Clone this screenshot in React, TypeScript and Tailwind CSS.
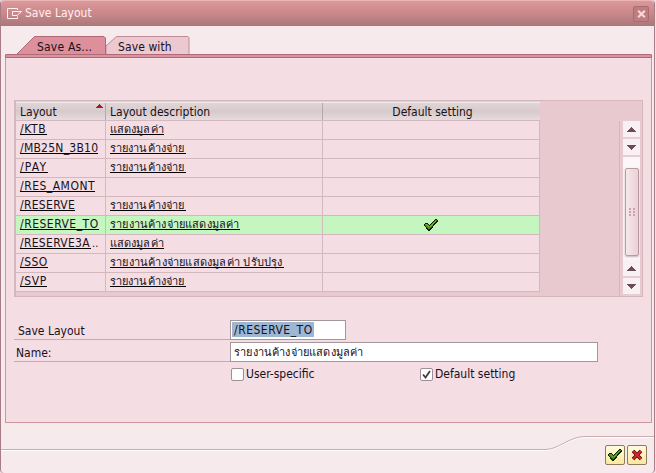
import type { ReactNode } from "react";

type Row = { name: string; nameClass: string; text: string; textClass: string; selected?: boolean; more?: boolean };

const rows: Row[] = [
  { name: "/KTB", nameClass: "w-[27px] tracking-[0.6px]", text: "แสดงมูลค่า", textClass: "w-[54px] tracking-[0.1px]" },
  { name: "/MB25N_3B10", nameClass: "w-[78px] tracking-[0.25px]", text: "รายงานค้างจ่าย", textClass: "w-[76px] tracking-[0.1px]" },
  { name: "/PAY", nameClass: "w-[28px] tracking-[1.2px]", text: "รายงานค้างจ่าย", textClass: "w-[76px] tracking-[0.1px]" },
  { name: "/RES_AMONT", nameClass: "w-[75px] tracking-[0.5px]", text: "", textClass: "" },
  { name: "/RESERVE", nameClass: "w-[55px] tracking-[0.3px]", text: "รายงานค้างจ่าย", textClass: "w-[76px] tracking-[0.1px]" },
  { name: "/RESERVE_TO", nameClass: "w-[79px] tracking-[0.5px]", text: "รายงานค้างจ่ายแสดงมูลค่า", textClass: "w-[130px] tracking-[0.17px]", selected: true },
  { name: "/RESERVE3A", nameClass: "w-[71px] tracking-[0.3px]", text: "แสดงมูลค่า", textClass: "w-[54px] tracking-[0.1px]", more: true },
  { name: "/SSO", nameClass: "w-[28px] tracking-[0.5px]", text: "รายงานค้างจ่ายแสดงมูลค่า ปรับปรุง", textClass: "w-[174px] tracking-[0.2px]" },
  { name: "/SVP", nameClass: "w-[27px] tracking-[0.6px]", text: "รายงานค้างจ่าย", textClass: "w-[76px] tracking-[0.1px]" },
];

function Check({ className = "", dark = false }: { className?: string; dark?: boolean }) {
  return (
    <svg className={className} width="14" height="12" viewBox="0 0 14 12" shapeRendering="crispEdges">
      <path d="M1 4h3v1h1v1h1V5h1V4h1V3h1V2h1V1h1V0h2v1h1v2h-1v1h-1v1h-1v1h-1v1h-1v1H9v1H8v1H7v1H6v1H4v-1H3v-1H2V8H1V7H0V5h1z" fill="#102008" />
      <path d="M1 5h3v1h1v1h1V6h1V5h1V4h1V3h1V2h1V1h2v1h-1v1h-1v1h-1v1h-1v1H9v1H8v1H7v1H6v1H4V9H3V8H2V7H1z" fill={dark ? "#438c0c" : "#548c16"} />
      <path d="M2 5h1v1h1v1h1v1H4V7H3V6H2zM6 7h1V6h1V5h1V4h1V3h1V2h1v1h-1v1h-1v1H9v1H8v1H7v1H6z" fill={dark ? "#6fb32c" : "#86bd35"} />
    </svg>
  );
}

function Arrow({ up = false }: { up?: boolean }) {
  return (
    <div className="flex h-[18px] w-[17px] items-center justify-center border-b-2 border-[#e9cdd2] bg-[#f8f0f2]">
      <svg width="9" height="5" viewBox="0 0 9 5" shapeRendering="crispEdges">
        <path d={up ? "M4 0h1v1h1v1h1v1h1v1h1v1H0V4h1V3h1V2h1V1h1z" : "M0 0h9v1H8v1H7v1H6v1H5v1H4V4H3V3H2V2H1V1H0z"} fill="#6e4b55" />
      </svg>
    </div>
  );
}

function Cell({ children, className }: { children?: ReactNode; className: string }) {
  return <div className={`h-[19px] shrink-0 border-r border-b border-[#d3b8bf] ${className}`}>{children}</div>;
}

export default function App() {
  return (
    <div className="flex h-[473px] w-[656px] overflow-hidden bg-[#f4dfe4] font-['DejaVu_Sans_Condensed','DejaVu_Sans','Noto_Sans',sans-serif] text-[12px] leading-[16px] whitespace-nowrap text-[#18101a]">
      <div className="relative flex h-[473px] w-[655px] flex-col rounded-[4px] border-x border-[#a87c84] bg-[#f6eaec]">
        <header className="flex h-[26px] shrink-0 items-center rounded-t-[4px] border-t border-[#ecb6b9] bg-linear-to-b from-[#dc9899] via-[#ca888b] to-[#aa7779] pl-[6px] text-[#fff0f1]">
          <svg width="15" height="12" viewBox="0 0 15 12" fill="none" stroke="#fff0f1" strokeWidth="1">
            <path d="M10.500 2V.5H.5v10H10.500V8.500M10 3.500H5.500v4H10M9.500 3.500h5L10 7.500" />
          </svg>
          <span className="-mt-px ml-[3px] w-[68px]">Save Layout</span>
          <div className="mr-[5px] ml-auto flex size-[16px] items-center justify-center rounded-[2px] border border-[#a76c70] bg-[#bd7e82]">
            <svg width="9" height="8" viewBox="0 0 9 8"><path d="M1.2 .8L7.8 7.2M7.8 .8L1.2 7.2" stroke="#ffd5d7" strokeWidth="2.2" /></svg>
          </div>
        </header>

        <nav className="flex h-[28px] shrink-0 items-end pl-[16px]">
          <div className="relative h-[18px] w-[89px] shrink-0">
            <svg className="absolute inset-0" width="89" height="18" viewBox="0 0 89 18">
              <path d="M0 18L17.5.5H87l1.5 1.5V18" fill="#dd8f9b" stroke="#b06a77" />
            </svg>
            <span className="absolute top-[3px] left-[20px] tracking-[0.2px]">Save As...</span>
          </div>
          <div className="relative h-[18px] w-[84px] shrink-0">
            <svg className="absolute inset-0" width="84" height="18" viewBox="0 0 84 18">
              <path d="M0 18V10L10.500.5H82l1 1V18" fill="#ecc9d1" stroke="#c08a95" />
            </svg>
            <span className="absolute top-[3px] left-[12px] tracking-[0.1px]">Save with</span>
          </div>
        </nav>

        <main className="ml-[4px] flex h-[369px] w-[647px] shrink-0 flex-col border border-t-0 border-[#cc95a0] bg-[#f4dde3]">
          <div className="-mx-px h-[4px] shrink-0 rounded-t-[2px] border border-[#b06a77] bg-[#dc93a0]" />
          <section className="mt-[42px] ml-[8px] h-[197px] w-[629px] shrink-0 border border-[#d3b8bf] bg-[#e9c9d0]">
            <div className="flex h-[20px] border-l border-[#d3b8bf] pt-px">
              <div className="flex h-[19px] w-[524px] border-t border-b border-t-[#f2e9ea] border-b-[#d3b8bf] bg-linear-to-b from-[#e0d5d6] via-[#d8cacc] to-[#e5dcdd] leading-[18px]">
                <div className="flex w-[90px] border-r border-[#b9a5aa] pl-[4px]">
                  <span>Layout</span>
                  <svg className="mt-px ml-auto mr-[2px]" width="7" height="4" viewBox="0 0 7 4" shapeRendering="crispEdges"><path d="M3 0h1v1h1v1h1v1h1v1H0V3h1V2h1V1h1z" fill="#b6142c" /></svg>
                </div>
                <div className="w-[217px] border-r border-[#b9a5aa] pl-[4px]">Layout description</div>
                <div className="w-[217px] pl-[2px] text-center">Default setting</div>
              </div>
            </div>
            <div className="flex">
              <div className="h-[175px] w-[605px] shrink-0 border-r border-l border-[#d3b8bf]">
                {rows.map((r, i) => (
                  <div key={i} className={`flex w-[524px] ${r.selected ? "bg-[#c5f6c0]" : "bg-[#f4dde3]"}`}>
                    <Cell className="flex w-[90px] pl-[4px]">
                      <span className={`h-[14px] shrink-0 border-b border-black leading-[16px] ${r.nameClass}`}>{r.name}</span>
                      {r.more && <span className="ml-px text-[11px] leading-[17px]">..</span>}
                    </Cell>
                    <Cell className="flex w-[217px] pl-[4px]">
                      {r.text && <span className={`h-[14px] border-b border-black text-[11px] leading-[18px] ${r.textClass}`}>{r.text}</span>}
                    </Cell>
                    <Cell className="flex w-[217px] items-center justify-center">{r.selected && <Check />}</Cell>
                  </div>
                ))}
              </div>
              <div className="ml-[3px] flex h-[175px] w-[17px] flex-col">
                <Arrow up />
                <Arrow />
                <div className="flex h-[103px] justify-center bg-[#fbf6f7] pt-[11px] pl-px">
                  <div className="flex h-[88px] w-[14px] items-center justify-center rounded-[2px] border border-[#b79aa2] bg-linear-to-r from-[#f7e8eb] to-[#ebd0d6] shadow-[0_1px_2px_#c9b3b8]">
                    <svg width="7" height="9" viewBox="0 0 7 9" shapeRendering="crispEdges"><path d="M0 0h2v2H0zM4 0h2v2H4zM0 3h2v2H0zM4 3h2v2H4zM0 6h2v2H0zM4 6h2v2H4z" fill="#c8a5ae" /></svg>
                  </div>
                </div>
                <Arrow up />
                <Arrow />
              </div>
            </div>
          </section>

          <form className="mt-[21px] ml-[8px] flex flex-col">
            <div className="flex h-[22px] items-end">
              <label className="h-[20px] w-[216px] border-b border-[#bdb0b4] pl-[4px] leading-[22px]">Save Layout</label>
              <div className="h-[20px] w-[116px] border border-[#a4979b] bg-white p-px leading-[16px]">
                <span className="block h-[15px] w-[82px] bg-[#9db6d2] pl-[2px] leading-[17px] tracking-[0.5px]">/RESERVE_TO</span>
              </div>
            </div>
            <div className="flex h-[22px] items-end">
              <label className="h-[20px] w-[216px] border-b border-[#bdb0b4] pl-[2px] leading-[22px]">Name:</label>
              <div className="h-[20px] w-[368px] border border-[#a4979b] bg-white pl-[3px] text-[11px] leading-[20px] tracking-[0.17px]">รายงานค้างจ่ายแสดงมูลค่า</div>
            </div>
            <div className="mt-[5px] flex h-[14px] items-center pl-[217px]">
              <i className="size-[13px] rounded-[2px] border border-[#9d8f93] bg-white" />
              <span className="ml-[2px] w-[174px]">User-specific</span>
              <i className="flex size-[13px] items-center justify-center rounded-[2px] border border-[#9d8f93] bg-white">
                <svg width="9" height="9" viewBox="0 0 9 9"><path d="M1 4.500L3.500 7.500L8 1" fill="none" stroke="#443c3e" strokeWidth="1.800" /></svg>
              </i>
              <span className="ml-[2px]">Default setting</span>
            </div>
          </form>
        </main>

        <footer className="relative flex h-[49px] shrink-0 justify-end gap-[2px] pt-[22px] pr-[7px]">
          <svg className="absolute inset-0" width="653" height="49" viewBox="0 0 653 49" fill="none">
            <path d="M0 27.500H544C558 27.500 568 14.500 584 14.500H653" stroke="#fff" />
            <path d="M0 26.500H544C558 26.500 568 13.500 584 13.500H653" stroke="#c9adb3" />
          </svg>
          <button className="relative flex size-[20px] items-center justify-center rounded-[2px] border border-[#8c7c5c] bg-linear-to-b from-[#fffbe0] to-[#fbe89c]"><Check dark /></button>
          <button className="relative flex size-[20px] items-center justify-center rounded-[2px] border border-[#8c7c5c] bg-linear-to-b from-[#fffbe0] to-[#fbe89c]">
            <svg width="12" height="12" viewBox="0 0 12 12"><path d="M2 2L10 10M10 2L2 10" stroke="#4b080c" strokeWidth="3.600" /><path d="M2 2L10 10M10 2L2 10" stroke="#dc2430" strokeWidth="2" /></svg>
          </button>
        </footer>
      </div>
    </div>
  );
}
